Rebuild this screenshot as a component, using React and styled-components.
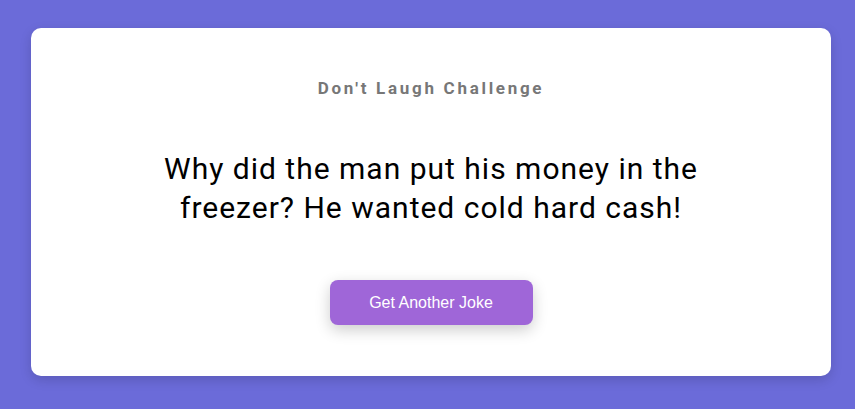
import React from "react";
import styled, { createGlobalStyle } from "styled-components";

const Global = createGlobalStyle`
  html, body { margin: 0; padding: 0; }
  body { background: #6b6bd9; font-family: Roboto, "Liberation Sans", sans-serif; }
`;

const Page = styled.div`
  box-sizing: border-box;
  min-height: 409px;
  padding: 28px 24px 33px 31px;
  display: flex;
  justify-content: flex-start;
  align-items: flex-start;
`;

const Card = styled.div`
  box-sizing: border-box;
  width: 800px;
  height: 348px;
  background: #ffffff;
  border-radius: 10px;
  box-shadow: 0 4px 12px rgba(0, 0, 0, 0.15);
  padding: 51px 40px 0;
  display: flex;
  flex-direction: column;
  align-items: center;
`;

const Title = styled.h3`
  margin: 0;
  font-family: Roboto, sans-serif;
  font-size: 17px;
  font-weight: 700;
  letter-spacing: 2.7px;
  line-height: 19px;
  color: #777777;
`;

const Joke = styled.p`
  margin: 51px 0 0;
  max-width: 600px;
  text-align: center;
  font-family: Roboto, sans-serif;
  font-size: 30px;
  line-height: 39px;
  letter-spacing: 1px;
  color: #000000;
`;

const Button = styled.button`
  margin-top: 53px;
  width: 203px;
  height: 45px;
  border: none;
  border-radius: 8px;
  background: #9f66d8;
  color: #ffffff;
  font-family: "Liberation Sans", Arial, sans-serif;
  font-size: 16px;
  cursor: pointer;
  box-shadow: 0 5px 15px rgba(0, 0, 0, 0.2);
`;

export default function App() {
  return (
    <>
      <Global />
      <Page>
        <Card>
          <Title>Don't Laugh Challenge</Title>
          <Joke>
            Why did the man put his money in the freezer? He wanted cold hard cash!
          </Joke>
          <Button>Get Another Joke</Button>
        </Card>
      </Page>
    </>
  );
}
